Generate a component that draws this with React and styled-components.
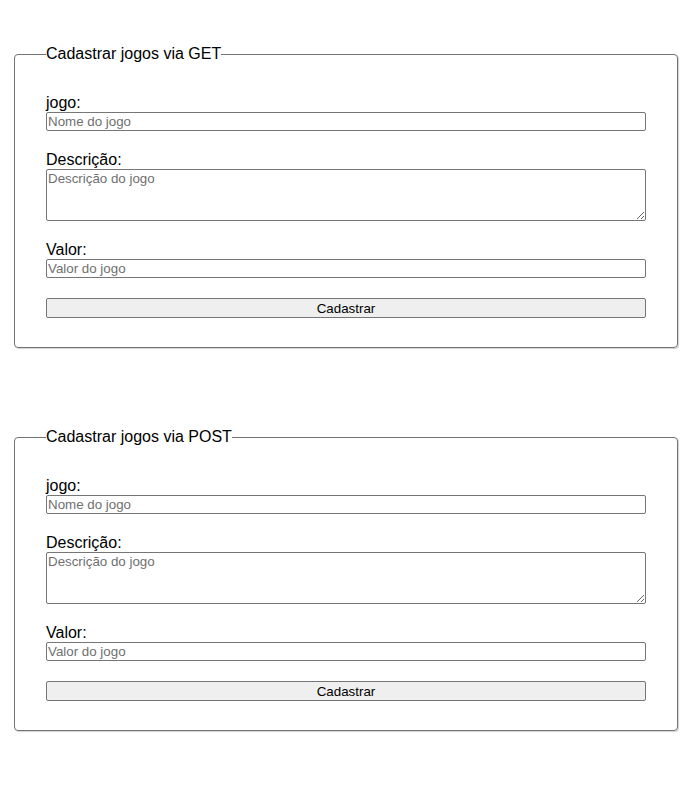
import styled, { createGlobalStyle } from "styled-components";

const GlobalStyle = createGlobalStyle`
  body {
    margin: 0;
    background: #fff;
    font-family: "Liberation Sans", Arial, sans-serif;
    color: #000;
  }
`;

const Page = styled.div`
  padding: 45px 16px 40px 14px;
  display: flex;
  flex-direction: column;
  gap: 80px;
`;

const Box = styled.fieldset`
  margin: 0;
  width: 664px;
  box-sizing: border-box;
  border: 1px solid #737373;
  border-radius: 4px;
  box-shadow: 1px 1px 1px rgba(0, 0, 0, 0.18);
  padding: 31px 31px 29px 31px;
`;

const Title = styled.legend`
  padding: 0;
  font-size: 16px;
  line-height: 18px;
`;

const Row = styled.div`
  display: flex;
  flex-direction: column;
  margin-bottom: 20px;
`;

const Label = styled.label`
  font-size: 16px;
  line-height: 18px;
`;

const fieldLook = `
  box-sizing: border-box;
  width: 100%;
  margin: 0;
  border: 1px solid #767676;
  border-radius: 2px;
  font-family: "Liberation Sans", Arial, sans-serif;
  font-size: 13.33px;
  background: #fff;
  &::placeholder {
    color: #707070;
  }
`;

const Input = styled.input`
  ${fieldLook}
  height: 19px;
  padding: 0 1px;
`;

const TextArea = styled.textarea`
  ${fieldLook}
  height: 52px;
  padding: 1px 1px;
  resize: vertical;
`;

const Button = styled.button`
  box-sizing: border-box;
  width: 100%;
  height: 20px;
  margin: 0;
  padding: 0;
  border: 1px solid #767676;
  border-radius: 2px;
  background: #efefef;
  color: #000;
  font-family: "Liberation Sans", Arial, sans-serif;
  font-size: 13.33px;
`;

function GameForm({ method }) {
  return (
    <Box>
      <Title>Cadastrar jogos via {method}</Title>
      <Row>
        <Label>jogo:</Label>
        <Input placeholder="Nome do jogo" />
      </Row>
      <Row>
        <Label>Descrição:</Label>
        <TextArea placeholder="Descrição do jogo" />
      </Row>
      <Row>
        <Label>Valor:</Label>
        <Input placeholder="Valor do jogo" />
      </Row>
      <Button type="button">Cadastrar</Button>
    </Box>
  );
}

export default function App() {
  return (
    <>
      <GlobalStyle />
      <Page>
        <GameForm method="GET" />
        <GameForm method="POST" />
      </Page>
    </>
  );
}
